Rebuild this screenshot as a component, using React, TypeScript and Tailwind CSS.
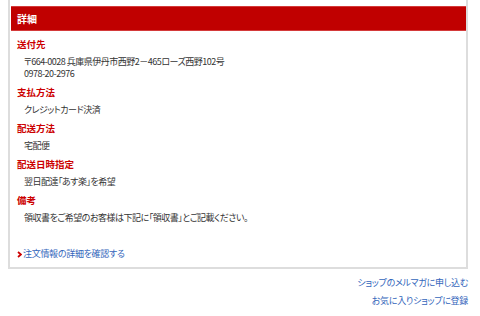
import React from 'react';

const rows: { label: string; lines: string[] }[] = [
  { label: '送付先', lines: ['〒664-0028 兵庫県伊丹市西野2－465ローズ西野102号', '0978-20-2976'] },
  { label: '支払方法', lines: ['クレジットカード決済'] },
  { label: '配送方法', lines: ['宅配便'] },
  { label: '配送日時指定', lines: ['翌日配達「あす楽」を希望'] },
  { label: '備考', lines: ['領収書をご希望のお客様は下記に「領収書」とご記載ください。'] },
];

export default function App() {
  return (
    <div className="w-[480px] h-[316px] overflow-hidden bg-white font-['Noto_Sans_CJK_JP',sans-serif] [font-feature-settings:'palt']">
      {/* detail box */}
      <div className="ml-[8px] w-[460px] border-x-2 border-b-2 border-[#dddddd] pt-[6px] pl-px pb-[4px]">
        <div className="h-[25px] bg-[#c00000] border-y border-[#d43a3a] flex items-center pl-[6px] text-[10px] font-bold text-white">
          詳細
        </div>

        <dl className="mt-[4px] pl-[6px]">
          {rows.map(row => (
            <React.Fragment key={row.label}>
              <dt className="h-[18px] leading-[18px] text-[9.5px] font-bold text-[#cc0000]">{row.label}</dt>
              <dd className="pl-[7px] py-[3px] text-[9px] leading-[12px] tracking-[-0.5px] text-[#333333]">
                {row.lines.map(line => (
                  <div key={line}>{line}</div>
                ))}
              </dd>
            </React.Fragment>
          ))}
        </dl>

        <div className="mt-[18px] pl-[6px] h-[18px] flex items-center gap-[1px] text-[9px] tracking-[-0.3px] text-[#3366bb]">
          <svg width="5" height="7" viewBox="0 0 5 7" className="shrink-0">
            <polyline points="1,1 4,3.5 1,6" fill="none" stroke="#cc0000" strokeWidth="1.8" />
          </svg>
          <span>注文情報の詳細を確認する</span>
        </div>
      </div>

      {/* shop links */}
      <div className="mt-[5px] w-[468px] flex flex-col items-end text-[9px] leading-[18px] tracking-[-0.3px] text-[#3366bb]">
        <span>ショップのメルマガに申し込む</span>
        <span>お気に入りショップに登録</span>
      </div>
    </div>
  );
}
